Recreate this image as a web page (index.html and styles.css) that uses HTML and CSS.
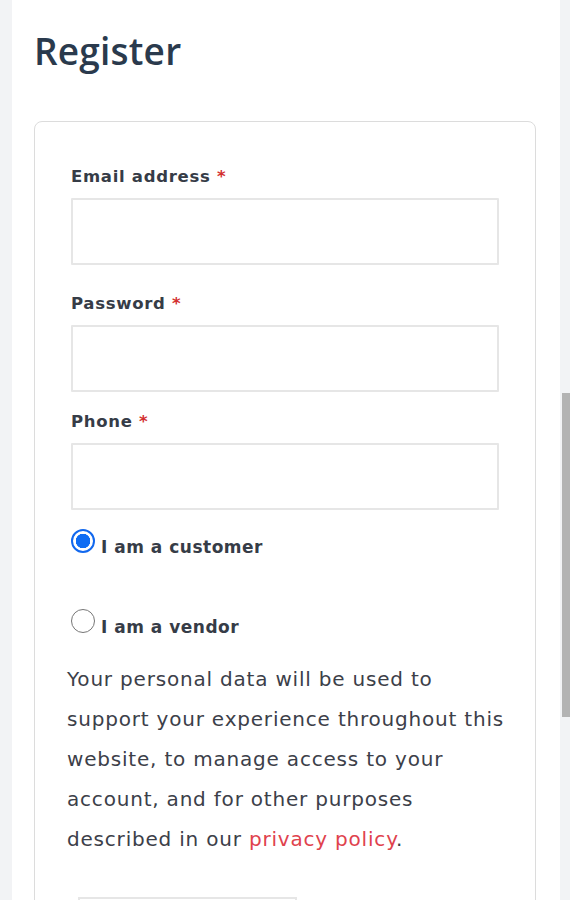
FILE: index.html
```html
<!DOCTYPE html>
<html lang="en">
<head>
<meta charset="utf-8">
<title>Register</title>
<link rel="stylesheet" href="styles.css">
</head>
<body>
<div class="page">
  <main class="panel">
    <h2 class="title">Register</h2>
    <form class="card">
      <div class="field field-email">
        <label class="label">Email address <span class="req">*</span></label>
        <input class="input" type="email">
      </div>
      <div class="field field-password">
        <label class="label">Password <span class="req">*</span></label>
        <input class="input" type="password">
      </div>
      <div class="field field-phone">
        <label class="label">Phone <span class="req">*</span></label>
        <input class="input" type="tel">
      </div>
      <label class="role role-first"><span class="radio checked"></span>I am a customer</label>
      <label class="role role-second"><span class="radio"></span>I am a vendor</label>
      <p class="privacy">Your personal data will be used to support your experience throughout this website, to manage access to your account, and for other purposes described in our <a class="link" href="#">privacy policy</a>.</p>
      <button class="btn" type="button">Register</button>
    </form>
  </main>
  <div class="scrollbar"></div>
</div>
</body>
</html>
```
FILE: styles.css
```css
html, body {
  margin: 0;
  padding: 0;
  height: 100%;
  overflow: hidden;
}
body {
  background: #f2f3f5;
  font-family: "DejaVu Sans", "Open Sans", sans-serif;
}
.page {
  position: relative;
  height: 100%;
}
.panel {
  margin: 0 10px 0 12px;
  padding: 29px 24px 0 22px;
  background: #ffffff;
  min-height: 100%;
  box-sizing: border-box;
}
.title {
  margin: 0 0 48px 0;
  font-family: "Open Sans", "DejaVu Sans", sans-serif;
  font-size: 37px;
  line-height: 44px;
  font-weight: 600;
  letter-spacing: 0.2px;
  color: #2a3a4d;
}
.card {
  border: 1px solid #dcdcdc;
  border-radius: 8px;
  padding: 43px 36px 40px 36px;
}
.field {
  display: flex;
  flex-direction: column;
}
.field-email { margin-bottom: 27px; }
.field-password { margin-bottom: 18px; }
.label {
  font-size: 16.5px;
  line-height: 24px;
  font-weight: 700;
  letter-spacing: 0.7px;
  color: #363c47;
  margin-bottom: 9px;
}
.req {
  color: #d32f2f;
}
.input {
  height: 67px;
  box-sizing: border-box;
  border: 2px solid #e6e6e6;
  border-radius: 1px;
  background: #fff;
  margin: 0;
  outline: none;
}
.role {
  display: block;
  font-size: 17px;
  line-height: 24px;
  font-weight: 700;
  letter-spacing: 0.5px;
  color: #363c47;
}
.role-first { margin-top: 19px; }
.role-second { margin-top: 50px; }
.radio {
  display: inline-block;
  width: 24px;
  height: 24px;
  box-sizing: border-box;
  border: 1.5px solid #767676;
  border-radius: 50%;
  background: #fff;
  margin-right: 6px;
  vertical-align: baseline;
}
.radio.checked {
  border: 2px solid #1268ee;
  background: radial-gradient(circle, #0f6cf3 0 7px, #ffffff 7.5px);
}
.privacy {
  margin: 20px -7px 0 -4px;
  font-size: 20px;
  line-height: 40px;
  letter-spacing: 0.8px;
  color: #3c4049;
}
.link {
  color: #e0424d;
  text-decoration: none;
}
.btn {
  display: block;
  margin: 38px 0 0 7px;
  width: 219px;
  height: 56px;
  border: 2px solid #e6e6e6;
  background: #fff;
  font-family: inherit;
}
.scrollbar {
  position: absolute;
  right: 0;
  top: 393px;
  width: 8px;
  height: 324px;
  background: #b3b3b3;
}
```
